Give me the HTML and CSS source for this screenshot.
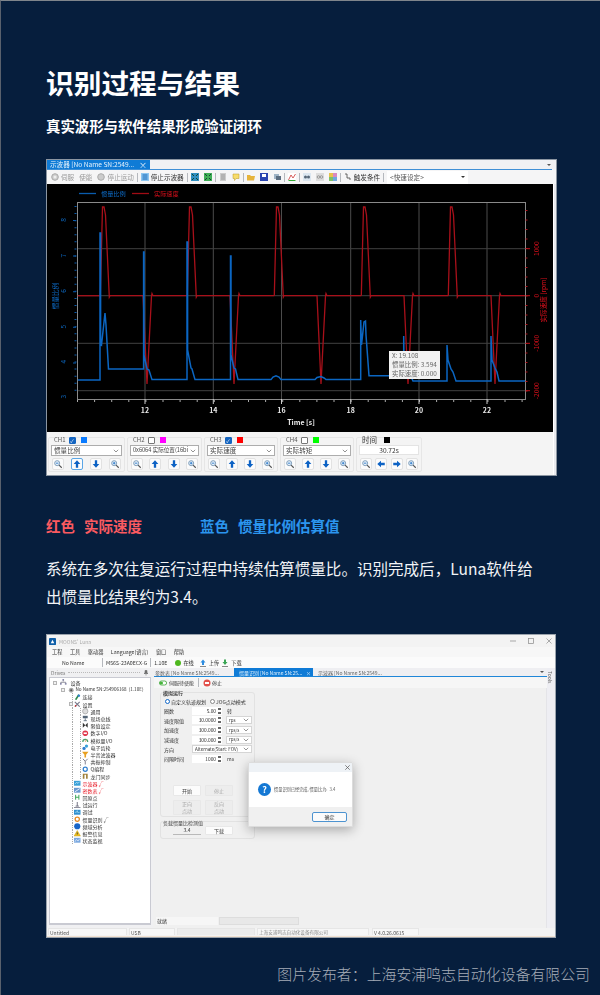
FILE: index.html
```html
<!DOCTYPE html>
<html lang="zh-CN">
<head>
    <meta charset="UTF-8">
    <meta name="viewport" content="width=device-width, initial-scale=1.0">
    <title>识别过程与结果</title>
    <link rel="stylesheet" href="styles.css">
</head>
<body>
<svg class="defs" width="0" height="0">
    <symbol id="zoom-out" viewBox="0 0 12 12"><circle cx="5" cy="5" r="3" fill="#e8f1fa" stroke="#6c8fb0"/><path d="M3.5 5h3" stroke="#1b6fc4"/><path d="M7.3 7.3 10.5 10.5" stroke="#555" stroke-width="1.3"/></symbol>
    <symbol id="zoom-in" viewBox="0 0 12 12"><circle cx="5" cy="5" r="3" fill="#e8f1fa" stroke="#6c8fb0"/><path d="M3.5 5h3M5 3.5v3" stroke="#1b6fc4"/><path d="M7.3 7.3 10.5 10.5" stroke="#555" stroke-width="1.3"/></symbol>
    <symbol id="up" viewBox="0 0 12 12"><path d="M6 1.500 10 6H7.400v4.500H4.600V6H2z" fill="#0d62c4"/></symbol>
    <symbol id="down" viewBox="0 0 12 12"><path d="M6 10.500 10 6H7.400V1.500H4.600V6H2z" fill="#0d62c4"/></symbol>
    <symbol id="left" viewBox="0 0 12 12"><path d="M1.500 6 6 2v2.600h4.500v2.800H6V10z" fill="#0d62c4"/></symbol>
    <symbol id="right" viewBox="0 0 12 12"><path d="M10.500 6 6 2v2.600H1.500v2.800H6V10z" fill="#0d62c4"/></symbol>
    <symbol id="chev" viewBox="0 0 6 4"><path d="M.8 .8 3 3 5.200 .8" fill="none" stroke="#666" stroke-width=".7"/></symbol>
</svg>

<div class="page">
    <h1 class="title">识别过程与结果</h1>
    <p class="subtitle">真实波形与软件结果形成验证闭环</p>

    <!-- oscilloscope window -->
    <div class="win scope">
        <div class="tabbar">
            <div class="tab-active"><span>示波器 [No Name SN:2549...</span><span class="tab-x">×</span></div>
            <div class="tab-fill"></div>
            <svg class="tab-menu" viewBox="0 0 6 4"><path d="M1 1h4L3 3z" fill="#555"/></svg>
        </div>
        <div class="scope-tools">
            <svg class="ico" viewBox="0 0 8 8"><circle cx="4" cy="4" r="3.300" fill="#ccc" stroke="#aaa"/><circle cx="4" cy="4" r="1.500" fill="#eee"/></svg>
            <span class="dim">伺服</span>
            <span class="dim lead">使能</span>
            <svg class="ico lead" viewBox="0 0 8 8"><circle cx="4" cy="4" r="3.300" fill="#ccc" stroke="#aaa"/></svg>
            <span class="dim">停止运动</span>
            <i class="sep"></i>
            <svg class="ico" viewBox="0 0 8 8"><rect width="8" height="8" fill="#8cc5f0"/><path d="M1.500 2h5M1.500 4h5M1.500 6h5" stroke="#1569b8"/></svg>
            <span>停止示波器</span>
            <i class="sep"></i>
            <svg class="ico" viewBox="0 0 8 8"><rect width="8" height="8" fill="#2f8fc0"/><path d="M1 1 3 3M7 1 5 3M1 7 3 5M7 7 5 5" stroke="#143"/></svg>
            <svg class="ico gap3" viewBox="0 0 8 8"><rect width="8" height="8" fill="#3fae56"/><path d="M1 1 3 3M7 1 5 3M1 7 3 5M7 7 5 5" stroke="#143"/></svg>
            <i class="sep"></i>
            <svg class="ico" viewBox="0 0 8 8"><rect x="1" width="6" height="8" fill="#ccc"/><path d="M2 2h4M2 4h4M2 6h4" stroke="#999"/></svg>
            <svg class="ico gap3" viewBox="0 0 8 8"><path d="M1 1h6v4.500H4L2.500 7.500V5.500H1z" fill="#f7dc6a" stroke="#b99a25" stroke-width=".5"/></svg>
            <i class="sep"></i>
            <svg class="ico" viewBox="0 0 8 8"><path d="M0 2h3l1 1h4L7 7.500H0z" fill="#e6b43c"/></svg>
            <svg class="ico gap3" viewBox="0 0 8 8"><rect width="8" height="8" fill="#2a44b0"/><rect x="2" y="1" width="4" height="3" fill="#fff"/></svg>
            <svg class="ico gap3" viewBox="0 0 8 8"><rect x="1" y="1" width="5" height="5" fill="#9fb4c6"/><rect x="3" y="3" width="5" height="4" fill="#5a6d80"/></svg>
            <i class="sep"></i>
            <svg class="ico" viewBox="0 0 8 8"><rect width="8" height="8" fill="#fff"/><path d="M.5 7 3 2l2 3 2.500-4" fill="none" stroke="#c33" stroke-width=".8"/><path d="M.5 7.500h7" stroke="#3a3"/></svg>
            <i class="sep"></i>
            <svg class="ico" viewBox="0 0 8 8"><rect width="8" height="8" fill="#dbe6f0"/><circle cx="2.500" cy="4" r="1.500" fill="#567"/><circle cx="5.500" cy="4" r="1.500" fill="#567"/></svg>
            <svg class="ico gap3" viewBox="0 0 8 8"><rect width="8" height="8" fill="#ddd"/><circle cx="2.500" cy="4" r="1.300" fill="none" stroke="#999"/><circle cx="5.500" cy="4" r="1.300" fill="none" stroke="#999"/></svg>
            <svg class="ico gap3" viewBox="0 0 8 8"><rect width="4" height="4" fill="#e8c24a"/><rect x="4" width="4" height="4" fill="#d98ac0"/><rect y="4" width="4" height="4" fill="#7cc06a"/><rect x="4" y="4" width="4" height="4" fill="#6fa8dc"/></svg>
            <i class="sep"></i>
            <svg class="ico" viewBox="0 0 8 8"><path d="M1 1h2v4h3v2" fill="none" stroke="#444" stroke-width=".8"/></svg>
            <span>触发条件</span>
            <i class="sep"></i>
            <div class="quick"><span>&lt;快速设定&gt;</span><svg class="quick-arrow" viewBox="0 0 6 4"><path d="M1 1h4L3 3z" fill="#333"/></svg></div>
        </div>

        <div class="scope-body">
            <div class="scope-main">
                <div class="chart">
                    <svg class="plot" viewBox="46 184 506 248">
                        <defs>
                            <clipPath id="plot-clip"><rect x="76" y="202" width="448" height="197"/></clipPath>
                            <path id="red-cycle" d="M99.300 295.700 101.500 207H103L104.500 215 108.300 297 109 295.700H142L146 384 150.500 296 151 293.500 152 295.700H186.300"/>
                        </defs>
                        <!-- legend -->
                        <path d="M78 193.500H95" stroke="#0a5cae" stroke-width="1.300"/>
                        <text class="leg-blue" x="100" y="195.500">惯量比例</text>
                        <path d="M131 193.500H148" stroke="#a00c14" stroke-width="1.300"/>
                        <text class="leg-red" x="153" y="195.500">实际速度</text>
                        <!-- grid -->
                        <path d="M144 202V399M212.300 202V399M280.500 202V399M349.700 202V399M418 202V399M486 202V399" stroke="#4c4c4c"/>
                        <path d="M77 248.700H524M77 295.700H524M77 343.300H524M77 390.700H524" stroke="#414141"/>
                        <rect x="76.500" y="202.500" width="448" height="197" fill="none" stroke="#8a8a8a"/>
                        <!-- ticks -->
                        <path d="M74.500 206V397" stroke="#0a5cae" stroke-width="2" stroke-dasharray="1 6.070"/>
                        <path d="M73.500 220V398" stroke="#0a5cae" stroke-width="3" stroke-dasharray="1 34.600"/>
                        <path d="M76 401H524" stroke="#aaa" stroke-width="2" stroke-dasharray="1 16.100"/>
                        <path d="M144 399V404M212.300 399V404M280.500 399V404M349.700 399V404M418 399V404M486 399V404" stroke="#ccc"/>
                        <path d="M525.500 210V396" stroke="#b0101a" stroke-width="2" stroke-dasharray="1 8.500"/>
                        <path d="M525 248.700h4M525 295.700h4M525 343.300h4M525 390.700h4" stroke="#c0101a"/>
                        <!-- axis labels -->
                        <g class="ax-blue">
                            <text transform="rotate(-90 65 220)" x="65" y="220">8</text>
                            <text transform="rotate(-90 65 255.700)" x="65" y="255.700">7</text>
                            <text transform="rotate(-90 65 291)" x="65" y="291">6</text>
                            <text transform="rotate(-90 65 326.700)" x="65" y="326.700">5</text>
                            <text transform="rotate(-90 65 361.700)" x="65" y="361.700">4</text>
                            <text transform="rotate(-90 65 396.700)" x="65" y="396.700">3</text>
                            <text transform="rotate(-90 57 296)" x="57" y="296">惯量比例</text>
                        </g>
                        <g class="ax-red">
                            <text transform="rotate(-90 538 248.700)" x="538" y="248.700">1000</text>
                            <text transform="rotate(-90 538 295.700)" x="538" y="295.700">0</text>
                            <text transform="rotate(-90 538 343.300)" x="538" y="343.300">-1000</text>
                            <text transform="rotate(-90 538 390.700)" x="538" y="390.700">-2000</text>
                            <text transform="rotate(-90 545 300)" x="545" y="300">实际速度 [rpm]</text>
                        </g>
                        <g class="ax-x">
                            <text x="144" y="412.500">12</text>
                            <text x="212.300" y="412.500">14</text>
                            <text x="280.500" y="412.500">16</text>
                            <text x="349.700" y="412.500">18</text>
                            <text x="418" y="412.500">20</text>
                            <text x="486" y="412.500">22</text>
                            <text x="300" y="424.500">Time [s]</text>
                        </g>
                        <!-- signals -->
                        <g clip-path="url(#plot-clip)" fill="none">
                            <g stroke="#a8101a" stroke-width="1.300">
                                <path d="M76.700 295.700H99.300"/>
                                <use href="#red-cycle"/>
                                <use href="#red-cycle" x="87"/>
                                <use href="#red-cycle" x="174"/>
                                <use href="#red-cycle" x="261"/>
                                <use href="#red-cycle" x="348"/>
                            </g>
                            <path stroke="#0b66c2" stroke-width="1.500" d="M76.700 380H99V233H99.600V344L100.500 345 104 313 105 325 107.500 369H142.600V252H143V355L146 369 148 370 151 379.600H186V242H186.600V350L190 368 191 369 194 379.600H229.500V256H230V355L233 368 234.500 369 237 379.600H270L272 377 275 375.700 278 377 280 379.600H314L316 377.500 320 376.500 323 378 325 379.600H359.700V320L360.500 345 363 322 364.500 321 365 335 368 375.700H402.700V336L403 360 406 368 408 372 412 381H446V345L447 360 450 369 452 372 455 381H490V336L491 360 494 368 496 372 498 381H524"/>
                        </g>
                    </svg>
                    <div class="readout">
                        <span>X: 19.108</span>
                        <span>惯量比例: 3.594</span>
                        <span>实际速度: 0.000</span>
                    </div>
                </div>

                <div class="channels">
                    <div class="chgroup w77">
                        <div class="chhead"><span>CH1</span><i class="check on">✓</i><i class="swatch sw-blue"></i></div>
                        <div class="select"><span>惯量比例</span><svg class="chev"><use href="#chev"/></svg></div>
                        <div class="chbtns">
                            <b class="btn"><svg><use href="#zoom-out"/></svg></b>
                            <b class="btn active"><svg><use href="#up"/></svg></b>
                            <b class="btn"><svg><use href="#down"/></svg></b>
                            <b class="btn"><svg><use href="#zoom-in"/></svg></b>
                        </div>
                    </div>
                    <div class="chgroup w75">
                        <div class="chhead"><span>CH2</span><i class="check"></i><i class="swatch sw-pink"></i></div>
                        <div class="select"><span class="clip">0x6064 实际位置(16bi</span><svg class="chev"><use href="#chev"/></svg></div>
                        <div class="chbtns">
                            <b class="btn"><svg><use href="#zoom-out"/></svg></b>
                            <b class="btn"><svg><use href="#up"/></svg></b>
                            <b class="btn"><svg><use href="#down"/></svg></b>
                            <b class="btn"><svg><use href="#zoom-in"/></svg></b>
                        </div>
                    </div>
                    <div class="chgroup w74">
                        <div class="chhead"><span>CH3</span><i class="check on">✓</i><i class="swatch sw-red"></i></div>
                        <div class="select"><span>实际速度</span><svg class="chev"><use href="#chev"/></svg></div>
                        <div class="chbtns">
                            <b class="btn"><svg><use href="#zoom-out"/></svg></b>
                            <b class="btn"><svg><use href="#up"/></svg></b>
                            <b class="btn"><svg><use href="#down"/></svg></b>
                            <b class="btn"><svg><use href="#zoom-in"/></svg></b>
                        </div>
                    </div>
                    <div class="chgroup w74">
                        <div class="chhead"><span>CH4</span><i class="check"></i><i class="swatch sw-green"></i></div>
                        <div class="select"><span>实际转矩</span><svg class="chev"><use href="#chev"/></svg></div>
                        <div class="chbtns">
                            <b class="btn"><svg><use href="#zoom-out"/></svg></b>
                            <b class="btn"><svg><use href="#up"/></svg></b>
                            <b class="btn"><svg><use href="#down"/></svg></b>
                            <b class="btn"><svg><use href="#zoom-in"/></svg></b>
                        </div>
                    </div>
                    <div class="chgroup w66">
                        <div class="chhead"><span class="time-label">时间</span><i class="swatch sw-black"></i></div>
                        <div class="timebox">30.72s</div>
                        <div class="chbtns">
                            <b class="btn"><svg><use href="#zoom-out"/></svg></b>
                            <b class="btn"><svg><use href="#left"/></svg></b>
                            <b class="btn"><svg><use href="#right"/></svg></b>
                            <b class="btn"><svg><use href="#zoom-in"/></svg></b>
                        </div>
                    </div>
                </div>
            </div>
            <div class="scrollstrip"></div>
        </div>
    </div>

    <div class="legend-line">
        <div class="leg-r"><span>红色</span><span>实际速度</span></div>
        <div class="leg-b"><span>蓝色</span><span>惯量比例估算值</span></div>
    </div>
    <p class="para">系统在多次往复运行过程中持续估算惯量比。识别完成后，Luna软件给<br>出惯量比结果约为3.4。</p>

    <!-- Luna window -->
    <div class="win luna">
        <div class="titlebar">
            <svg class="app-ico" viewBox="0 0 8 8"><rect width="8" height="8" rx="1" fill="#0f5fa8"/><path d="M2 6 4 2l2 4z" fill="#fff"/></svg>
            <span class="app-name">MOONS' Luna</span>
            <div class="winctl">
                <svg viewBox="0 0 8 8"><path d="M1 4h6" stroke="#888" stroke-width=".7"/></svg>
                <svg viewBox="0 0 8 8"><rect x="1.500" y="1.500" width="5" height="5" fill="none" stroke="#888" stroke-width=".7"/></svg>
                <svg viewBox="0 0 8 8"><path d="M1.500 1.500l5 5M6.500 1.500l-5 5" stroke="#888" stroke-width=".7"/></svg>
            </div>
        </div>
        <div class="menubar">
            <span>工程</span><span>工具</span><span>驱动器</span><span>Language(语言)</span><span>窗口</span><span>帮助</span>
        </div>
        <div class="devbar">
            <span class="dev-name">No Name</span>
            <i class="sep"></i>
            <span>M56S-23A0ECX-G</span>
            <i class="sep"></i>
            <span>1.10E</span>
            <i class="dot"></i>
            <span>在线</span>
            <svg class="ico lead" viewBox="0 0 8 8"><path d="M4 .5 6.500 3.500H5v2.500H3V3.500H1.500z" fill="#2d8ce0"/><path d="M1 7.500h6" stroke="#888"/></svg>
            <span>上传</span>
            <svg class="ico" viewBox="0 0 8 8"><path d="M4 6 6.500 3H5V.5H3V3H1.500z" fill="#3aa655"/><path d="M1 7.500h6" stroke="#888"/></svg>
            <span>下载</span>
        </div>

        <div class="luna-main">
            <div class="drives">
                <div class="drives-head"><span>Drives</span><i class="grip"></i><svg class="pin" viewBox="0 0 6 6"><path d="M2 .5h2v2.500l1 .5H1l1-.5zM3 3.500v2" stroke="#555" stroke-width=".5" fill="#777"/></svg></div>
                <ul class="tree">
                    <li class="lv0"><i class="exp"></i><svg class="ti" viewBox="0 0 8 8"><path d="M4 1v2M1 6V4h6v2" fill="none" stroke="#778"/><rect x="3" y="0" width="2" height="2" fill="#88a"/><rect y="5" width="2" height="2" fill="#88a"/><rect x="6" y="5" width="2" height="2" fill="#88a"/></svg>设备</li>
                    <li class="lv1"><i class="exp"></i><svg class="ti" viewBox="0 0 8 8"><circle cx="4" cy="4" r="3" fill="#aaa"/><circle cx="4" cy="4" r="1.300" fill="#555"/></svg>No Name SN:254906168&nbsp;&nbsp;(1.10E)</li>
                    <li class="lv2"><svg class="ti" viewBox="0 0 8 8"><path d="M2 7 6 1" stroke="#2a8a4a" stroke-width="2"/><circle cx="6" cy="2" r="1.500" fill="#2f7fd0"/></svg>连接</li>
                    <li class="lv2x"><i class="exp"></i><svg class="ti" viewBox="0 0 8 8"><path d="M1 1 7 7M7 1 1 7" stroke="#778" stroke-width="1.300"/><circle cx="2" cy="6" r="1" fill="#c33"/></svg>设置</li>
                    <li class="lv3"><svg class="ti" viewBox="0 0 8 8"><circle cx="4" cy="4" r="3.300" fill="#ddd" stroke="#999" stroke-width=".8"/></svg>通用</li>
                    <li class="lv3"><svg class="ti" viewBox="0 0 8 8"><rect x="1" y="1" width="6" height="3" fill="#567"/><path d="M4 4v3M2 7h4" stroke="#567"/></svg>现场总线</li>
                    <li class="lv3"><svg class="ti" viewBox="0 0 8 8"><path d="M1 1v6l3-3zM7 1v6l-3-3z" fill="#333"/></svg>限值设定</li>
                    <li class="lv3"><svg class="ti" viewBox="0 0 8 8"><circle cx="4" cy="4" r="3.500" fill="#e0364a"/><rect x="2" y="3" width="4" height="2" fill="#fff"/></svg>数字I/O</li>
                    <li class="lv3"><svg class="ti" viewBox="0 0 8 8"><path d="M1 6a3 3 0 0 1 6 0" fill="none" stroke="#4aa06a" stroke-width="1.500"/><path d="M4 6 5.500 3" stroke="#d95"/></svg>模拟量I/O</li>
                    <li class="lv3"><svg class="ti" viewBox="0 0 8 8"><circle cx="2.500" cy="5.500" r="2" fill="#2f7fd0"/><circle cx="5.500" cy="2.500" r="2" fill="#38a0d8"/></svg>电子齿轮</li>
                    <li class="lv3"><svg class="ti" viewBox="0 0 8 8"><path d="M0 1h8L5 4.500V8H3V4.500z" fill="#e8a020"/></svg>半音滤波器</li>
                    <li class="lv3"><svg class="ti" viewBox="0 0 8 8"><path d="M1 1 4 4l3-3M4 4v4" fill="none" stroke="#667"/></svg>共振抑制</li>
                    <li class="lv3"><svg class="ti" viewBox="0 0 8 8"><circle cx="4" cy="4" r="2.500" fill="none" stroke="#2f7fd0" stroke-width="1.500"/></svg>Q编程</li>
                    <li class="lv3"><svg class="ti" viewBox="0 0 8 8"><path d="M1 1h6v1H1zM1 2h2v5H1zM5 2h2v5H5z" fill="#a0803a"/></svg>龙门同步</li>
                    <li class="lv2 hot"><svg class="ti" viewBox="0 0 8 8"><rect y="1" width="8" height="6" fill="#38a0d8"/><path d="M1 5 3 3l2 1 2-2" fill="none" stroke="#fff" stroke-width=".7"/></svg>示波器&nbsp;√</li>
                    <li class="lv2 hot"><svg class="ti" viewBox="0 0 8 8"><rect y="1" width="8" height="6" fill="#6a9ad0"/><path d="M1 6 7 2" stroke="#fff"/></svg>密数表&nbsp;√</li>
                    <li class="lv2"><svg class="ti" viewBox="0 0 8 8"><path d="M2 1v6M6 1v6M2 4h4" stroke="#3aa655" stroke-width="1.200"/></svg>回原点</li>
                    <li class="lv2"><svg class="ti" viewBox="0 0 8 8"><path d="M4 0v5M0 7h8M2 5h4" stroke="#667" stroke-width="1.100"/></svg>试运行</li>
                    <li class="lv2"><svg class="ti" viewBox="0 0 8 8"><rect y="1" width="8" height="6" fill="#2f8fd0"/><path d="M1 4h2l1-2 1 3 1-1h1" fill="none" stroke="#dff" stroke-width=".6"/></svg>调试</li>
                    <li class="lv2"><svg class="ti" viewBox="0 0 8 8"><circle cx="4" cy="4" r="2.600" fill="none" stroke="#e88a20" stroke-width="1.600"/></svg>惯量识别&nbsp;√</li>
                    <li class="lv2"><svg class="ti" viewBox="0 0 8 8"><circle cx="4" cy="4" r="3.800" fill="#1a66c8"/></svg>频域分析</li>
                    <li class="lv2"><svg class="ti" viewBox="0 0 8 8"><path d="M4 .5 8 7.500H0z" fill="#f0c020" stroke="#a80" stroke-width=".4"/><path d="M4 3v2.500" stroke="#333"/></svg>报警信息</li>
                    <li class="lv2"><svg class="ti" viewBox="0 0 8 8"><rect y="1" width="8" height="6" fill="#7aa8e0"/><path d="M1 6 3 3l2 2 2-3" fill="none" stroke="#fff" stroke-width=".7"/></svg>状态监视</li>
                </ul>
            </div>

            <div class="work">
                <div class="doc-tabs">
                    <span class="doc-tab">参数表 [No Name SN:2549...</span>
                    <span class="doc-tab active"><span>惯量识别 [No Name SN:25...</span><span>×</span></span>
                    <span class="doc-tab third">示波器 [No Name SN:2549...</span>
                    <svg class="tab-menu" viewBox="0 0 6 4"><path d="M1 1h4L3 3z" fill="#555"/></svg>
                </div>
                <div class="work-tools">
                    <svg class="toggle" viewBox="0 0 10 6"><rect x=".5" y=".5" width="9" height="5" rx="2.500" fill="#fff" stroke="#3aa635"/><circle cx="3" cy="3" r="2" fill="#45b53a"/></svg>
                    <span>伺服待使能</span>
                    <i class="sep"></i>
                    <svg class="ico" viewBox="0 0 8 8"><circle cx="4" cy="4" r="3.500" fill="#e2504a"/><rect x="2" y="3" width="4" height="2" fill="#fff"/></svg>
                    <span>停止</span>
                </div>
                <div class="work-body">
                    <div class="fieldset sim">
                        <div class="fs-label">模拟运行</div>
                        <div class="radios">
                            <i class="radio on"></i><span>自定义轨迹规划</span>
                            <i class="radio jog"></i><span>JOG点动模式</span>
                        </div>
                        <div class="frow"><label>圈数</label><div class="num"><span>5.00</span><i class="spin"></i></div><span class="unit">转</span></div>
                        <div class="frow"><label>速度限值</label><div class="num"><span>30.0000</span><i class="spin"></i></div><div class="usel"><span>rps</span><svg class="chev"><use href="#chev"/></svg></div></div>
                        <div class="frow"><label>加速度</label><div class="num"><span>300.000</span><i class="spin"></i></div><div class="usel"><span>rps/s</span><svg class="chev"><use href="#chev"/></svg></div></div>
                        <div class="frow"><label>减速度</label><div class="num"><span>300.000</span><i class="spin"></i></div><div class="usel"><span>rps/s</span><svg class="chev"><use href="#chev"/></svg></div></div>
                        <div class="frow"><label>方向</label><div class="dirsel"><span>Alternate(Start: FOV)</span><svg class="chev"><use href="#chev"/></svg></div></div>
                        <div class="frow"><label>间隔时间</label><div class="num"><span>1000</span><i class="spin"></i></div><span class="unit">ms</span></div>
                        <div class="actions">
                            <span class="act">开始</span>
                            <span class="act off">停止</span>
                            <span class="act off two">正向<br>点动</span>
                            <span class="act off two">反向<br>点动</span>
                        </div>
                    </div>
                    <div class="fieldset detect">
                        <div class="fs-label">负载惯量比检测值</div>
                        <div class="detect-row">
                            <span class="detect-val">3.4</span>
                            <span class="act">下载</span>
                        </div>
                    </div>
                    <div class="work-foot">
                        <span class="ready">就绪</span>
                        <span class="progress"></span>
                    </div>
                </div>
            </div>
            <div class="tools-strip"><span>Tools</span></div>
        </div>

        <div class="statusbar">
            <span class="st st-1">Untitled</span>
            <span class="st st-2">USB</span>
            <span class="st st-3"></span>
            <span class="st st-4">上海安浦鸣志自动化设备有限公司</span>
            <span class="st st-5">V 4.0.26.0615</span>
        </div>

        <div class="dialog">
            <div class="dlg-title"><svg viewBox="0 0 8 8"><path d="M1.500 1.500l5 5M6.500 1.500l-5 5" stroke="#555" stroke-width=".8"/></svg></div>
            <div class="dlg-body">
                <i class="dlg-q">?</i>
                <span>惯量识别已经完成, 惯量比为:&nbsp;&nbsp;3.4</span>
            </div>
            <div class="dlg-foot"><span class="dlg-ok">确定</span></div>
        </div>
    </div>

    <p class="credit">图片发布者：上海安浦鸣志自动化设备有限公司</p>
</div>
</body>
</html>
```

FILE: styles.css
```css
* {
    box-sizing: border-box;
}
html, body {
    margin: 0;
    padding: 0;
}
body {
    background: #061e3d;
    font-family: "Noto Sans CJK SC", "Liberation Sans", sans-serif;
    color: #fff;
}
.defs {
    position: absolute;
}
.page {
    width: 600px;
    height: 995px;
    padding: 62px 0 0 45px;
    border-top: 1px solid #7f858c;
    border-left: 1px solid #59616d;
    overflow: hidden;
}
.title {
    margin: 0;
    font-size: 27.700px;
    line-height: 38px;
    font-weight: 700;
}
.subtitle {
    margin: 15px 0 0;
    font-size: 14.400px;
    line-height: 20px;
    font-weight: 700;
}
.legend-line {
    margin-top: 40px;
    font-size: 14.500px;
    line-height: 20px;
    font-weight: 700;
    display: flex;
    gap: 58px;
}
.leg-r, .leg-b {
    display: flex;
    gap: 9px;
}
.leg-r {
    color: #fb5a60;
}
.leg-b {
    color: #2b95ee;
}
.para {
    margin: 18px 0 0;
    font-size: 15.550px;
    line-height: 28px;
    color: #f2f4f7;
}
.credit {
    margin: 26px 10px 0 0;
    font-size: 14.900px;
    line-height: 20px;
    text-align: right;
    color: #a5acb7;
    font-weight: 300;
    white-space: nowrap;
}

/* shared window bits */
.win {
    position: relative;
    color: #333;
    font-size: 6.600px;
    line-height: 1;
    filter: blur(.3px);
    white-space: nowrap;
}
.ico {
    flex: none;
    width: 8px;
    height: 8px;
}
.sep {
    flex: none;
    width: 1px;
    height: 9px;
    margin: 0 1px;
    background: #b5b8bd;
}
.lead {
    margin-left: 3px;
}
.gap3 {
    margin-left: 3px;
}
.dim {
    color: #9a9a9a;
}
.chev {
    flex: none;
    width: 6px;
    height: 4px;
}
.tab-menu {
    flex: none;
    width: 6px;
    height: 4px;
}

/* scope window */
.scope {
    width: 511px;
    height: 317px;
    margin-top: 23px;
    border: 1px solid #8b95a1;
    background: #f4f5f7;
}
.tabbar {
    display: flex;
    align-items: center;
    height: 9px;
}
.tab-active {
    width: 103px;
    height: 9px;
    padding: 0 3px;
    display: flex;
    justify-content: space-between;
    align-items: center;
    background: #0f7bd6;
    color: #e6f2fc;
}
.tab-x {
    font-size: 8px;
}
.tab-fill {
    flex: 1;
    height: 9px;
    background: #f0f1f4;
}
.tabbar .tab-menu {
    margin: 0 4px 0 -10px;
}
.scope-tools {
    display: flex;
    align-items: center;
    gap: 2px;
    height: 15px;
    padding-left: 4px;
    border-top: 1px solid #3f8fd6;
    margin-right: 4px;
    background: #f5f5f6;
}
.quick {
    width: 81px;
    height: 13px;
    padding: 0 0 0 3px;
    display: flex;
    align-items: center;
    justify-content: space-between;
    background: #fff;
    color: #555;
}
.quick-arrow {
    width: 6px;
    height: 4px;
    margin-right: 2px;
}
.scope-body {
    display: flex;
}
.scope-main {
    width: 506px;
}
.scrollstrip {
    flex: 1;
    background: #e9eaee;
    border-left: 1px solid #fff;
}
.chart {
    position: relative;
    height: 248px;
    background: #000;
}
.plot {
    display: block;
    width: 506px;
    height: 248px;
}
.plot text {
    font-size: 6.200px;
    font-family: "Noto Sans CJK SC", "Liberation Sans", sans-serif;
}
.leg-blue, .ax-blue {
    fill: #0d6cc8;
}
.leg-red, .ax-red {
    fill: #e0101c;
}
.plot .ax-blue text, .plot .ax-red text {
    text-anchor: middle;
    font-size: 6.600px;
}
.plot .ax-x text {
    fill: #e8e8e8;
    font-size: 7px;
    font-weight: 700;
    text-anchor: middle;
}
.readout {
    position: absolute;
    left: 342px;
    top: 167px;
    width: 51px;
    height: 28px;
    padding: 1.500px 3px;
    display: flex;
    flex-direction: column;
    justify-content: space-between;
    background: #f2f2f2;
    color: #666;
    font-size: 6.400px;
}
.channels {
    display: flex;
    gap: 2px;
    height: 43px;
    padding: 5px 0 0 1px;
    background: #f4f4f4;
}
.chgroup {
    flex: none;
    height: 35px;
    padding: 0 2px;
    border: 1px solid #e6e6e6;
    border-radius: 2px;
}
.w77 { width: 77px; }
.w75 { width: 75px; }
.w74 { width: 74px; }
.w66 { width: 66px; }
.chhead {
    display: flex;
    align-items: center;
    gap: 3px;
    height: 8px;
    margin-top: -2px;
    padding-left: 3px;
    color: #555;
    font-size: 6px;
}
.time-label {
    font-size: 7.500px;
    color: #333;
    margin-right: 2px;
}
.check {
    width: 7px;
    height: 7px;
    border: 1px solid #777;
    border-radius: 1px;
    background: #fff;
    font-style: normal;
    font-size: 5px;
    line-height: 5px;
    text-align: center;
    color: #fff;
}
.check.on {
    background: #1565c0;
    border-color: #1565c0;
}
.swatch {
    width: 6px;
    height: 6px;
    margin-left: 2px;
}
.sw-blue { background: #0a7bff; }
.sw-pink { background: #ff00ff; }
.sw-red { background: #ff0000; }
.sw-green { background: #00ff00; }
.sw-black { background: #000; }
.select {
    height: 11px;
    margin-top: 1px;
    padding: 0 2px;
    display: flex;
    align-items: center;
    justify-content: space-between;
    background: #fff;
    border: 1px solid #adadad;
    color: #444;
}
.clip {
    font-size: 5.600px;
}
.timebox {
    height: 10px;
    margin-top: 1px;
    background: #fff;
    border: 1px solid #e4e4e4;
    text-align: center;
    line-height: 8px;
}
.chbtns {
    display: flex;
    justify-content: space-between;
    margin-top: 2px;
    padding: 0 1px;
}
.w66 .chbtns {
    margin-top: 3px;
}
.btn {
    width: 12px;
    height: 12px;
    background: #fbfbfb;
    border: 1px solid #e2e2e2;
    border-radius: 2px;
    display: block;
}
.btn svg {
    display: block;
    width: 10px;
    height: 10px;
}
.btn.active {
    border-color: #5aa6e6;
}

/* luna window */
.luna {
    width: 510px;
    height: 304px;
    margin-top: 24px;
    border: 1px solid #9aa3ad;
    background: #f0f0f0;
    font-size: 5px;
}
.titlebar {
    display: flex;
    align-items: center;
    height: 12px;
    padding-left: 2px;
    background: #f3f3f3;
}
.app-ico {
    width: 7px;
    height: 7px;
}
.app-name {
    margin-left: 3px;
    color: #aaa;
}
.winctl {
    margin-left: auto;
    display: flex;
    gap: 10px;
    padding-right: 2px;
}
.winctl svg {
    width: 8px;
    height: 8px;
}
.menubar {
    display: flex;
    gap: 7.500px;
    align-items: center;
    height: 10px;
    padding-left: 5px;
    background: #f7f7f7;
    font-size: 5.200px;
}
.devbar {
    display: flex;
    align-items: center;
    gap: 2px;
    height: 11px;
    background: #fbfbfb;
    padding-left: 15px;
    font-size: 5.200px;
}
.dev-name {
    width: 37px;
}
.devbar .sep {
    margin: 0 1px;
}
.dot {
    width: 6px;
    height: 6px;
    margin-left: 6px;
    border-radius: 50%;
    background: #4fb81f;
}
.luna-main {
    display: flex;
    height: 260px;
}
.drives {
    width: 106px;
    padding: 0 2px;
    background: #f0f0f2;
}
.drives-head {
    display: flex;
    align-items: center;
    gap: 3px;
    height: 9px;
    padding-left: 2px;
    color: #777;
}
.grip {
    flex: 1;
    height: 2px;
    border-top: 1px dotted #bbb;
}
.pin {
    width: 6px;
    height: 6px;
    margin-right: 2px;
}
.tree {
    list-style: none;
    margin: 0;
    padding: 1px 0 0;
    height: 248px;
    background: #fff;
    border: 1px solid #c9cad2;
    border-bottom-width: 2px;
    color: #333;
}
.tree li {
    display: flex;
    align-items: center;
    height: 7.200px;
    gap: 1px;
}
.ti {
    flex: none;
    width: 6.500px;
    height: 6.500px;
}
.exp {
    flex: none;
    width: 4px;
    height: 4px;
    margin-right: 2px;
    border: 1px solid #b5b5b5;
    background: #f2f2f2;
}
.tree .lv2, .tree .lv2x {
    background: linear-gradient(#aaa 50%, transparent 50%) 22px 0 / 1px 2px repeat-y;
}
.tree .lv3 {
    background:
        linear-gradient(#aaa 50%, transparent 50%) 22px 0 / 1px 2px repeat-y,
        linear-gradient(#aaa 50%, transparent 50%) 30px 0 / 1px 2px repeat-y;
}
.lv0 { padding-left: 3px; }
.lv0 .ti { margin-right: 3px; }
.lv1 { padding-left: 11px; font-size: 4.600px; }
.lv2 { padding-left: 24px; }
.lv2 .ti { margin-right: 1px; }
.lv2x { padding-left: 19px; }
.lv2x .exp { margin-right: 0; }
.lv2x .ti { margin-right: 1px; }
.lv3 { padding-left: 32px; }
.lv3 .ti { margin-right: 1px; }
.hot {
    color: #e8202c;
}
.work {
    flex: 1;
    display: flex;
    flex-direction: column;
    margin-left: 1px;
}
.doc-tabs {
    display: flex;
    align-items: center;
    height: 9px;
    border-bottom: 1px solid #1f86d8;
    padding-left: 1px;
    color: #666;
    background: #efeff2;
}
.doc-tab {
    width: 71px;
}
.doc-tab.active {
    width: 79px;
    height: 8px;
    margin-left: 8px;
    padding: 0 2px 0 5px;
    display: flex;
    align-items: center;
    justify-content: space-between;
    background: #0f7bd6;
    color: #dff0fc;
}
.doc-tab.third {
    margin-left: 5px;
}
.doc-tabs .tab-menu {
    margin-left: auto;
    margin-right: 2px;
}
.work-tools {
    display: flex;
    align-items: center;
    gap: 1px;
    height: 11px;
    padding-left: 5px;
    background: #f6f6f6;
}
.toggle {
    width: 8px;
    height: 6px;
    margin-right: 1px;
}
.work-tools .sep {
    margin: 0 3px;
}
.work-body {
    flex: 1;
    display: flex;
    flex-direction: column;
    padding-top: 4px;
    background: #f0f0f0;
    border-right: 1px solid #e4e4e8;
}
.fieldset {
    width: 95px;
    margin-left: 6px;
    padding: 0 2px;
    border: 1px solid #e2e2e2;
    border-radius: 3px;
}
.sim {
    height: 125px;
    display: flex;
    flex-direction: column;
}
.detect {
    height: 18px;
    margin-top: 4px;
}
.fs-label {
    height: 8px;
    margin-top: -4px;
    line-height: 8px;
    font-weight: 700;
    color: #444;
}
.detect .fs-label {
    font-weight: 400;
    margin-top: -3px;
}
.radios {
    display: flex;
    align-items: center;
    height: 8px;
    margin-bottom: 1px;
    padding-left: 2px;
}
.radio {
    flex: none;
    width: 5px;
    height: 5px;
    margin-right: 1px;
    border-radius: 50%;
    border: 1px solid #888;
    background: #fff;
}
.radio.on {
    border: 1.500px solid #1268c8;
}
.radio.jog {
    margin-left: 4px;
}
.frow {
    display: flex;
    align-items: center;
    height: 9.600px;
}
.frow label {
    width: 29px;
    padding-left: 1px;
}
.num {
    width: 30px;
    height: 8px;
    padding-right: 6px;
    position: relative;
    background: #fff;
    font-size: 4.800px;
    text-align: right;
    line-height: 8px;
}
.spin {
    position: absolute;
    right: 1px;
    top: 1px;
    width: 3px;
    height: 6px;
    border-top: 2px solid #666;
    border-bottom: 2px solid #666;
}
.unit {
    margin-left: 5px;
}
.usel {
    width: 26px;
    height: 8px;
    margin-left: 4px;
    padding: 0 2px;
    display: flex;
    align-items: center;
    justify-content: space-between;
    background: #fff;
    border: 1px solid #d5d5d5;
    font-size: 4.400px;
}
.dirsel {
    width: 60px;
    height: 8px;
    padding: 0 2px;
    display: flex;
    align-items: center;
    justify-content: space-between;
    background: #fff;
    border: 1px solid #d5d5d5;
    font-size: 4.500px;
}
.actions {
    margin-top: auto;
    margin-bottom: 1px;
    padding-left: 10px;
    display: grid;
    grid-template-columns: 28px 28px;
    column-gap: 4px;
    row-gap: 4px;
}
.act {
    display: block;
    height: 11px;
    background: #fcfcfc;
    border: 1px solid #e8e8e8;
    border-radius: 1px;
    text-align: center;
    line-height: 9px;
    color: #444;
}
.act.off {
    background: #ededed;
    color: #aaa;
}
.act.two {
    height: 15px;
    line-height: 6.500px;
}
.detect-row {
    display: grid;
    grid-template-columns: 28px 28px;
    column-gap: 4px;
    padding-left: 10px;
    margin-top: -1px;
}
.detect-row .act {
    height: 9px;
    line-height: 7px;
}
.detect-val {
    height: 9px;
    text-align: center;
    line-height: 8px;
    border-bottom: 1.500px solid #b9b9b9;
}
.work-foot {
    margin-top: auto;
    margin-bottom: 3px;
    margin-left: 2px;
    display: flex;
    gap: 1px;
    height: 8px;
}
.ready {
    width: 62px;
    padding-left: 1px;
    background: #f6f6f6;
    line-height: 8px;
}
.progress {
    width: 80px;
    background: #e8e8e8;
    border: 1px solid #ddd;
}
.tools-strip {
    width: 8px;
    background: #eeeef3;
    position: relative;
}
.tools-strip span {
    position: absolute;
    left: 1px;
    top: 3px;
    color: #666;
    writing-mode: vertical-rl;
}
.statusbar {
    display: flex;
    gap: 2px;
    height: 9px;
    padding: 0 0 1px 1px;
    background: #f3f3f3;
    border-bottom: 1px solid #f2e2d2;
    color: #555;
}
.st {
    background: #f7f7f7;
    border: 1px solid #e6e6e6;
    border-bottom: none;
    line-height: 7px;
    padding-left: 1px;
}
.st-1 { width: 79px; }
.st-2 { width: 46px; }
.st-3 { width: 78px; background: #ececec; }
.st-4 { width: 112px; font-size: 4.600px; color: #888; }
.st-5 { width: 47px; margin-left: 1px; }
.dialog {
    position: absolute;
    left: 201px;
    top: 127px;
    width: 105px;
    height: 65px;
    display: flex;
    flex-direction: column;
    border-radius: 2px;
    overflow: hidden;
    box-shadow: 0 3px 12px rgba(0, 0, 0, 0.3);
    border: 1px solid #dcdcdc;
}
.dlg-title {
    display: flex;
    justify-content: flex-end;
    align-items: center;
    height: 9px;
    padding-right: 1px;
    background: #eef2f6;
}
.dlg-title svg {
    width: 7px;
    height: 7px;
}
.dlg-body {
    display: flex;
    align-items: center;
    gap: 3px;
    height: 35px;
    padding-left: 9px;
    background: #fff;
    font-size: 4.200px;
    color: #555;
}
.dlg-q {
    flex: none;
    width: 13px;
    height: 13px;
    border-radius: 50%;
    background: #1478d4;
    color: #fff;
    font-style: normal;
    font-size: 9px;
    font-weight: 700;
    line-height: 13px;
    text-align: center;
}
.dlg-foot {
    flex: 1;
    display: flex;
    justify-content: flex-end;
    align-items: center;
    padding-right: 5px;
    background: #f0f0f0;
}
.dlg-ok {
    width: 35px;
    height: 10px;
    background: #fbfbfb;
    border: 1px solid #4d93d0;
    border-radius: 2px;
    text-align: center;
    line-height: 8px;
}
```
